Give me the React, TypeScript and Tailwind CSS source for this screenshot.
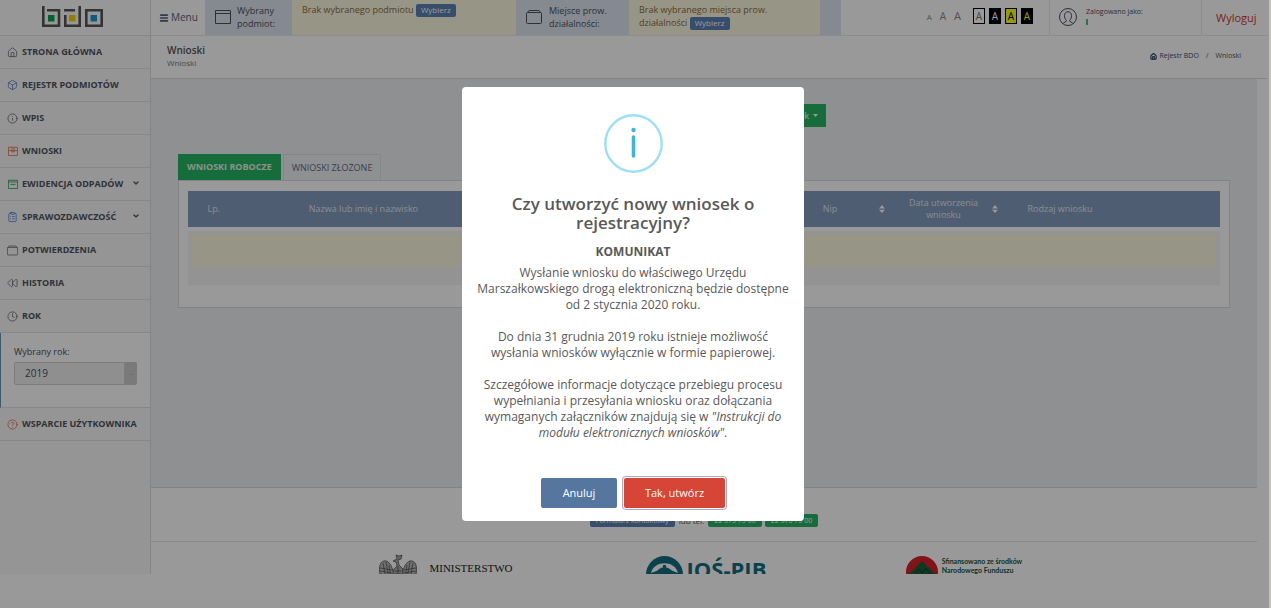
import type { ReactNode } from "react";
import {
  Box,
  ChevronDown,
  CircleHelp,
  ClipboardList,
  Clock,
  House,
  Info,
  Menu,
  Rewind,
} from "lucide-react";

function BdoLogo() {
  return (
    <svg width="62" height="22" viewBox="0 0 62 22" fill="none" stroke="#555" strokeWidth="2.6" aria-label="BDO" role="img">
      <path d="M1.3 0v19.7H17V4.3H5" />
      <path d="M22 4.3h11M23.3 9V19.7h14.4V0" />
      <path d="M44.3 4.3h15.4v15.4H44.3z" />
      <path d="M6 9h6.500v6.500H6z" fill="#00a651" stroke="none" />
      <path d="M27 9h6.500v6.500H27z" fill="#ffcc00" stroke="none" />
      <path d="M48.500 9H55v6.500h-6.500z" fill="#1c9ad6" stroke="none" />
    </svg>
  );
}

function WindowIcon({ size }: { size: number }) {
  return (
    <svg width={size} height={size} viewBox="0 0 16 16" fill="none" stroke="currentColor" strokeWidth="1">
      <path d="M.5 1.500h15v13H.5zM.5 4.500h15" />
    </svg>
  );
}

function FolderIcon({ size }: { size: number }) {
  return (
    <svg width={size} height={size} viewBox="0 0 16 16" fill="none" stroke="currentColor" strokeWidth="1">
      <rect x=".5" y="3.500" width="15" height="11" rx="1" />
      <path d="M1.500 3.500l1.500-2h10l1.500 2" />
    </svg>
  );
}

function CaseIcon({ size }: { size: number }) {
  return (
    <svg width={size} height={size} viewBox="0 0 12 12" fill="none" stroke="currentColor" strokeWidth="1">
      <path d="M.5 1.500h11v10H.5zM.5 5.500h11M3.500 3.500h5M4.500 5.500v1.500h3V5.500" />
    </svg>
  );
}

function ListIcon({ size }: { size: number }) {
  return (
    <svg width={size} height={size} viewBox="0 0 12 12" fill="none" stroke="currentColor" strokeWidth="1">
      <path d="M.5 1.500h11v10H.5zM.5 3.500h11M3 6.500h6" />
    </svg>
  );
}

function UserIcon() {
  return (
    <svg width="18" height="18" viewBox="0 0 18 18" fill="none" stroke="currentColor" strokeWidth="1">
      <circle cx="9" cy="9" r="8.500" />
      <path d="M4 15.500c.5-1.500 3.500-1.200 3.500-3C6 11 5.500 9.500 5.500 7.500c0-5 7-5 7 0 0 2-.5 3.500-2 5 0 1.800 3 1.500 3.500 3" />
    </svg>
  );
}

function SortIcon() {
  return (
    <svg width="6" height="8" viewBox="0 0 6 8" fill="#fff">
      <path d="M0 3.400 3 0l3 3.400zM0 4.800h6L3 8z" />
    </svg>
  );
}

function NavItem({ icon, label, expandable }: { icon: ReactNode; label: string; expandable?: boolean }) {
  return (
    <a href="#" className="flex h-[33px] items-center border-b border-[#dfe3e9] pr-[10px] pl-[7px] text-[9px] font-bold whitespace-nowrap text-[#4f545c]">
      <span className="mr-1 flex w-[11px] justify-center">{icon}</span>
      {label}
      {expandable && <ChevronDown size={8} strokeWidth={4} className="mb-[2px] ml-auto" />}
    </a>
  );
}

function Sidebar() {
  return (
    <aside className="w-[151px] shrink-0 border-r border-[#d9dde3] bg-[#f8f9fb]">
      <div className="flex h-[36px] items-center justify-center border-b border-[#dfe3e9] bg-[#fcfcfc] pr-1 pb-[2px]">
        <BdoLogo />
      </div>
      <nav>
        <NavItem icon={<House size={11} strokeWidth={1.5} />} label="STRONA GŁÓWNA" />
        <NavItem icon={<Box size={12} strokeWidth={1.5} className="text-[#3b6fb5]" />} label="REJESTR PODMIOTÓW" />
        <NavItem icon={<Info size={11} strokeWidth={1.5} />} label="WPIS" />
        <NavItem icon={<span className="text-[#e2714a]"><CaseIcon size={10} /></span>} label="WNIOSKI" />
        <NavItem icon={<span className="text-[#2c9c5c]"><ListIcon size={10} /></span>} label="EWIDENCJA ODPADÓW" expandable />
        <NavItem icon={<ClipboardList size={12} strokeWidth={1.5} className="text-[#2f6fc4]" />} label="SPRAWOZDAWCZOŚĆ" expandable />
        <NavItem icon={<FolderIcon size={11} />} label="POTWIERDZENIA" />
        <NavItem icon={<Rewind size={12} strokeWidth={1.5} />} label="HISTORIA" />
        <NavItem icon={<Clock size={11} strokeWidth={1.5} />} label="ROK" />
        <div className="flex h-[75px] flex-col border-b border-l border-b-[#dfe3e9] border-l-[#5f9ab8] bg-white pt-3 pr-[13px] pl-[13px] text-[#4b5058]">
          <label htmlFor="rok" className="text-[9px] leading-[14px]">Wybrany rok:</label>
          <div className="mt-[3px] flex h-[23px]">
            <select id="rok" className="min-w-0 flex-1 appearance-none rounded-l-xs border border-[#cfcfcf] bg-[#eee] pl-[10px] text-[10px]">
              <option>2019</option>
            </select>
            <span className="w-3 rounded-r-xs bg-[#ccc] text-center text-[8px] leading-[22px] text-[#aaa]">–</span>
          </div>
        </div>
        <NavItem icon={<CircleHelp size={11} strokeWidth={1.5} className="text-[#e2553f]" />} label="WSPARCIE UŻYTKOWNIKA" />
      </nav>
    </aside>
  );
}

function PickButton() {
  return (
    <button className="h-[13px] rounded-xs bg-[#5a82b4] px-[5px] text-[8px] leading-[12px] text-white">Wybierz</button>
  );
}

function TopBar() {
  return (
    <header className="flex h-[36px] border-b border-[#e7e9ec] bg-white text-[9px] leading-[13px] text-[#4b5058]">
      <button className="flex w-[54px] shrink-0 items-center gap-[2px] pl-2 text-[10px] text-[#55617a]">
        <Menu size={10} strokeWidth={4} />
        Menu
      </button>
      <div className="flex w-[87px] shrink-0 items-center gap-[6px] bg-[#dde6ef] pb-[2px] pl-[10px]">
        <WindowIcon size={16} />
        <span>Wybrany<br />podmiot:</span>
      </div>
      <div className="shrink grow-[204] basis-0 bg-[#fcf8e0] px-[10px] pt-[3px] text-[#8a6d3b]">
        Brak wybranego podmiotu <PickButton />
      </div>
      <div className="flex w-[113px] shrink-0 items-center gap-[7px] bg-[#dde6ef] pb-[2px] pl-[10px]">
        <FolderIcon size={16} />
        <span>Miejsce prow.<br />działalności:</span>
      </div>
      <div className="shrink grow-[171] basis-0 bg-[#fcf8e0] px-[10px] pt-[3px] text-[#8a6d3b]">
        Brak wybranego miejsca prow.<br />działalności <PickButton />
      </div>
      <div className="w-[21px] shrink-0 bg-[#dde6ef]" />
      <div className="flex w-[209px] shrink-0 items-center justify-end border-r border-[#e7e9ec] pr-4 pb-[3px]">
        <div className="mr-3 flex items-baseline gap-2 text-[#888]">
          <button className="text-[8px]">A</button>
          <button className="text-[10px]">A</button>
          <button className="text-[11px]">A</button>
        </div>
        <div className="flex gap-1 text-[10px]">
          <button className="h-4 w-3 border border-black text-[#777]">A</button>
          <button className="h-4 w-3 border border-black bg-black text-white">A</button>
          <button className="h-4 w-3 border border-black bg-[#ffff00] text-black">A</button>
          <button className="h-4 w-3 border border-black bg-black text-[#ffff00]">A</button>
        </div>
      </div>
      <div className="flex w-[152px] shrink-0 items-center gap-[9px] border-r border-[#e7e9ec] pb-[2px] pl-[9px] text-[7px]">
        <UserIcon />
        <div className="leading-[11px]">
          Zalogowano jako:
          <span className="mt-[2px] mb-[3px] block h-[6px] w-[2px] bg-[#4fbd7d]" />
        </div>
      </div>
      <a href="#" className="flex w-[65px] shrink-0 items-center pl-[14px] text-[11px] text-[#c8372b]">Wyloguj</a>
    </header>
  );
}

function PageHeading() {
  return (
    <div className="flex h-[43px] items-center justify-between border-b border-[#d8dade] bg-white pr-[26px] pb-[2px] pl-4 text-[#555]">
      <div>
        <h1 className="text-[10px] leading-[13px] font-semibold">Wnioski</h1>
        <p className="text-[8px] leading-[11px] text-[#777]">Wnioski</p>
      </div>
      <nav className="flex items-center gap-[7px] text-[7px]">
        <a href="#" className="flex items-center gap-[2px] text-[#34506f]">
          <House size={7} strokeWidth={4} />
          Rejestr BDO
        </a>
        <span>/</span>
        <span>Wnioski</span>
      </nav>
    </div>
  );
}

function HeadCell({ children, sortable }: { children?: ReactNode; sortable?: boolean }) {
  return (
    <th className="font-normal">
      <div className="flex items-center px-[5px]">
        <span className="flex-1">{children}</span>
        {sortable && <SortIcon />}
      </div>
    </th>
  );
}

function ApplicationsTable() {
  return (
    <table className="w-full table-fixed text-[9px] leading-[12px]">
      <colgroup>
        <col className="w-[5%]" />
        <col className="w-[24%]" />
        <col className="w-[28%]" />
        <col className="w-[11%]" />
        <col className="w-[11%]" />
        <col className="w-[11%]" />
        <col className="w-[10%]" />
      </colgroup>
      <thead>
        <tr className="h-[38px] bg-[#829bbe] text-[#e4eaf2]">
          <HeadCell>Lp.</HeadCell>
          <HeadCell>Nazwa lub imię i nazwisko</HeadCell>
          <HeadCell sortable>Numer</HeadCell>
          <HeadCell sortable>Nip</HeadCell>
          <HeadCell sortable>Data utworzenia wniosku</HeadCell>
          <HeadCell>Rodzaj wniosku</HeadCell>
          <HeadCell />
        </tr>
      </thead>
      <tbody>
        <tr>
          <td colSpan={7} className="border-t-4 border-white bg-[#f6f6f6] px-1 pt-[3px] pb-[18px]">
            <div className="h-[33px] bg-[#fcf8e0]" />
          </td>
        </tr>
      </tbody>
    </table>
  );
}

function Content() {
  return (
    <main className="mr-[10px] border-b border-[#d8dade] bg-[#eff1f4] px-[27px] pt-[25px] pb-[179px]">
      <div className="flex justify-center">
        <div className="flex w-[244px] justify-end">
          <button className="flex h-[23px] items-center gap-1 bg-[#27b463] px-2 text-[9px] text-white">
            Utwórz nowy wniosek
            <svg width="5" height="3" viewBox="0 0 5 3" fill="#fff"><path d="M0 0h5L2.500 3z" /></svg>
          </button>
        </div>
      </div>
      <div className="mt-[27px] flex gap-[2px] text-[9px]">
        <button className="h-[26px] bg-[#27b463] px-[9px] font-bold text-[#e4f5ea]">WNIOSKI ROBOCZE</button>
        <button className="h-[26px] border border-b-0 border-[#dde0e6] px-2 text-[#5e6c86]">WNIOSKI ZŁOŻONE</button>
      </div>
      <section className="border border-[#d8dade] bg-white px-[9px] pt-[10px] pb-[22px]">
        <ApplicationsTable />
      </section>
    </main>
  );
}

function EagleEmblem() {
  return (
    <svg width="38" height="46" viewBox="0 0 38 46" fill="none" stroke="#555" strokeWidth=".8">
      <path d="M17 1l3 1 3-1-1 4-3 1 1 5 4 4v14H14V16l4-4-1-4-3-1 4-2z" fill="#aaa" />
      <path d="M14 17C12 8 6 4 2 9c-3 5-1 11 0 17l4-2 1 5 4-4 3 4z" fill="#bbb" />
      <path d="M24 17c2-9 8-13 12-8 3 5 1 11 0 17l-4-2-1 5-4-4-3 4z" fill="#bbb" />
      <path d="M4 9l3 16M7 8l3 16M10 11l2 14M34 9l-3 16M31 8l-3 16M28 11l-2 14M1 14l12 2M1 17l12 2M1 20l13 2M37 14l-12 2M37 17l-12 2M37 20l-13 2M16 17h6M16 20h6M19 12v14" />
    </svg>
  );
}

function FundLogo() {
  return (
    <svg width="32" height="32" viewBox="0 0 32 32">
      <circle cx="16" cy="16" r="16" fill="#d8202a" />
      <path d="M16 5 30 19v4l-5 7H7l-5-7v-4z" fill="#14613a" />
      <path d="M9 17l4-4 3 4 4-5 4 6" stroke="#0c4528" fill="none" />
    </svg>
  );
}

function Footer() {
  return (
    <footer className="bg-white text-[8px] text-[#555]">
      <div className="mr-[10px] flex h-[54px] items-start justify-center gap-[3px] border-b border-[#e3e5e8] pt-[26px] text-[7px] leading-[13px]">
        <a href="#" className="h-[13px] rounded-xs bg-[#5a82b4] px-[6px] text-white">Formularz kontaktowy</a>
        <span className="px-[1px] text-[8px]">lub tel:</span>
        <a href="#" className="h-[13px] rounded-xs bg-[#27b463] px-[6px] text-white">22 375 75 00</a>
        <a href="#" className="h-[13px] rounded-xs bg-[#27b463] px-[6px] text-white">22 375 75 00</a>
      </div>
      <div className="mr-[10px] flex h-[32px] justify-center overflow-hidden">
        <div className="flex w-[260px] items-start justify-center gap-3 pt-[12px]">
          <EagleEmblem />
          <span className="pt-[7px] font-['Liberation_Serif',serif] text-[11px] leading-[14px] text-[#222]">MINISTERSTWO</span>
        </div>
        <div className="flex w-[260px] items-start justify-center gap-1 pt-[14px]">
          <svg width="37" height="37" viewBox="0 0 37 37">
            <circle cx="18.500" cy="18.500" r="18.500" fill="#0f6f80" />
            <path d="M5 17C8 4 29 4 32 17q-13-7-27 0z" fill="#fff" />
            <path d="M11 14.500q7.500-7 15 0-7.500 3-15 0z" fill="#0f6f80" />
            <circle cx="18.500" cy="10.500" r="1.800" fill="#0f6f80" />
          </svg>
          <span className="text-[22px] leading-[27px] font-bold text-[#0f6f80]">IOŚ-PIB</span>
        </div>
        <div className="flex w-[256px] items-start justify-center gap-1 pt-[14px]">
          <FundLogo />
          <span className="pt-[1px] font-[Lato,sans-serif] text-[7px] leading-[9px] font-bold text-[#17553a]">
            Sfinansowano ze środków<br />Narodowego Funduszu
          </span>
        </div>
      </div>
    </footer>
  );
}

function ConfirmDialog() {
  return (
    <div className="fixed inset-0 flex items-center justify-center border-r-2 border-[#c3c79c] bg-black/40 pr-[3px]">
      <div role="dialog" aria-modal="true" aria-labelledby="dialog-title" className="w-[342px] rounded-sm bg-white px-3 pt-[27px] pb-[13px] text-center text-[#595959]">
        <svg width="59" height="59" viewBox="0 0 59 59" className="mx-auto" fill="none">
          <circle cx="29.500" cy="29.500" r="28.200" stroke="#9de0f6" strokeWidth="2.400" />
          <circle cx="29.500" cy="16" r="2.200" fill="#3fb5dc" />
          <path d="M29.500 23v19" stroke="#3fb5dc" strokeWidth="3.600" strokeLinecap="round" />
        </svg>
        <h2 id="dialog-title" className="mt-[21px] text-[17px] leading-[19px] font-semibold">
          Czy utworzyć nowy wniosek o rejestracyjny?
        </h2>
        <div className="mt-3 text-[12px] leading-[16px]">
          <p className="mb-[5px] font-bold">KOMUNIKAT</p>
          <p>Wysłanie wniosku do właściwego Urzędu Marszałkowskiego drogą elektroniczną będzie dostępne od 2 stycznia 2020 roku.</p>
          <p className="mt-4">Do dnia 31 grudnia 2019 roku istnieje możliwość wysłania wniosków wyłącznie w formie papierowej.</p>
          <p className="mt-4">
            Szczegółowe informacje dotyczące przebiegu procesu wypełniania i przesyłania wniosku oraz dołączania
            wymaganych załączników znajdują się w <em>"Instrukcji do modułu elektronicznych wniosków"</em>.
          </p>
        </div>
        <div className="mt-[37px] flex justify-center gap-[7px] text-[11px] text-white">
          <button className="h-[30px] w-[76px] rounded-xs bg-[#55779f]">Anuluj</button>
          <button className="h-[30px] w-[101px] rounded-xs bg-[#d64535] ring-1 ring-[#b9a9b5] ring-offset-1">Tak, utwórz</button>
        </div>
      </div>
    </div>
  );
}

export default function App() {
  return (
    <div className="min-h-screen bg-white pr-1 font-['Open_Sans',sans-serif]">
      <div className="flex">
        <Sidebar />
        <div className="min-w-0 flex-1">
          <TopBar />
          <PageHeading />
          <Content />
          <Footer />
        </div>
      </div>
      <ConfirmDialog />
    </div>
  );
}
